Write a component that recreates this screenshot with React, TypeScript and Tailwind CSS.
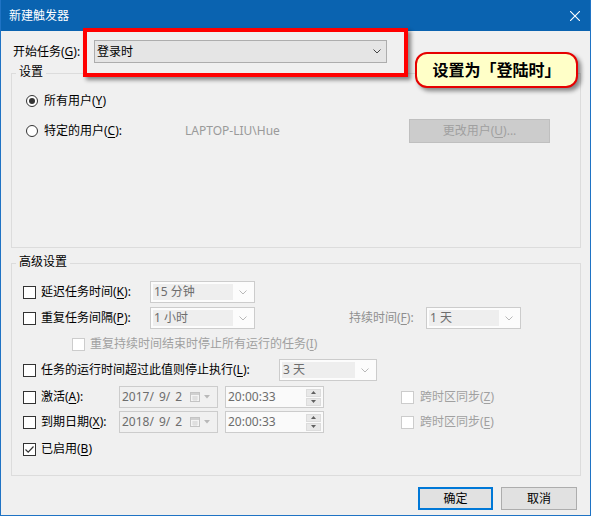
import type { ReactNode } from 'react';

// accelerator key, underlined like a Win32 label
const U = ({ children }: { children: ReactNode }) => (
  <span className="underline decoration-1 underline-offset-[2px]">{children}</span>
);

function CheckBox({ checked = false, disabled = false }: { checked?: boolean; disabled?: boolean }) {
  return (
    <span
      className={`flex h-[13px] w-[13px] shrink-0 items-center justify-center border bg-white ${
        disabled ? 'border-[#cccccc]' : 'border-[#333333]'
      }`}
    >
      {checked && (
        <svg width="11" height="11" viewBox="0 0 11 11">
          <path d="M1.5 5.5 L4.2 8.2 L9.5 2.5" fill="none" stroke="#333333" strokeWidth="1.2" />
        </svg>
      )}
    </span>
  );
}

function Radio({ checked = false }: { checked?: boolean }) {
  return (
    <span className="flex h-[12px] w-[12px] shrink-0 items-center justify-center rounded-full border border-[#333333] bg-white">
      {checked && <span className="h-[6px] w-[6px] rounded-full bg-[#333333]" />}
    </span>
  );
}

function Chevron({ color }: { color: string }) {
  return (
    <svg width="8" height="5" viewBox="0 0 8 5">
      <path d="M0.5 0.5 L4 4 L7.5 0.5" fill="none" stroke={color} strokeWidth="1" />
    </svg>
  );
}

function DisabledCombo({ value, className }: { value: string; className: string }) {
  return (
    <div className={`flex h-[22px] shrink-0 items-stretch border border-[#cccccc] bg-[#fcfcfc] p-[2px] ${className}`}>
      <div className="flex flex-1 items-center bg-[#eeeeee] pl-[1px] text-[#6d6d6d]">{value}</div>
      <div className="flex w-[19px] items-center justify-center">
        <Chevron color="#b8b8b8" />
      </div>
    </div>
  );
}

function DateBox({ y, m, d }: { y: string; m: string; d: string }) {
  return (
    <div className="flex h-[22px] w-[99px] shrink-0 items-center border border-[#cccccc] bg-[#f0f0f0] pl-[2px] text-[#6d6d6d]">
      <span>{y}/</span>
      <span className="ml-[5px]">{m}/</span>
      <span className="ml-[5px]">{d}</span>
      <span className="ml-auto mr-[7px] flex items-center gap-[4px]">
        <svg width="10" height="10" viewBox="0 0 10 10">
          <rect x="0.5" y="0.5" width="9" height="9" fill="#f4f4f4" stroke="#c4c4c4" />
          <rect x="1" y="1" width="8" height="2" fill="#d0d0d0" />
          <path d="M2 5h6M2 7h6M4 4v5M6 4v5" stroke="#d4d4d4" strokeWidth="0.8" />
        </svg>
        <svg width="6" height="4" viewBox="0 0 6 4">
          <path d="M0 0 L6 0 L3 3.5 Z" fill="#b8b8b8" />
        </svg>
      </span>
    </div>
  );
}

function TimeBox() {
  return (
    <div className="flex h-[22px] w-[99px] shrink-0 items-center border border-[#cccccc] bg-[#fafafa] pl-[2px] text-[#6d6d6d]">
      <span>20:00:33</span>
      <div className="ml-auto mr-[2px] flex h-[17px] w-[15px] flex-col gap-[1px]">
        <div className="flex flex-1 items-center justify-center border border-[#dcdcdc] bg-[#e8e8e8]">
          <svg width="5" height="3" viewBox="0 0 5 3">
            <path d="M0 3 L2.5 0 L5 3 Z" fill="#606060" />
          </svg>
        </div>
        <div className="flex flex-1 items-center justify-center border border-[#dcdcdc] bg-[#e8e8e8]">
          <svg width="5" height="3" viewBox="0 0 5 3">
            <path d="M0 0 L5 0 L2.5 3 Z" fill="#606060" />
          </svg>
        </div>
      </div>
    </div>
  );
}

export default function App() {
  return (
    <div className="relative flex h-[516px] w-[591px] flex-col border-x border-b border-[#1f73c4] bg-[#f0f0f0] font-['Noto_Sans','Noto_Sans_CJK_SC',sans-serif] text-[12px] leading-[16px] text-black">
      {/* Title bar */}
      <div className="flex h-[31px] shrink-0 items-center justify-between bg-[#0a63b0] pl-[8px] pr-[10px] text-white">
        <span>新建触发器</span>
        <svg width="10" height="10" viewBox="0 0 10 10">
          <path d="M0 0 L10 10 M10 0 L0 10" stroke="#ffffff" strokeWidth="1.1" />
        </svg>
      </div>

      <div className="flex flex-1 flex-col px-[10px]">
        {/* Begin the task */}
        <div className="mt-[9px] flex h-[23px] items-center">
          <span className="w-[83px] pl-[2px]">
            开始任务(<U>G</U>):
          </span>
          <div className="flex h-[23px] w-[293px] items-center justify-between border border-[#adadad] bg-[#e5e5e5] pl-[2px] pr-[5px]">
            <span>登录时</span>
            <Chevron color="#444444" />
          </div>
        </div>

        {/* Settings */}
        <fieldset className="mt-[1px] w-[570px] border border-[#dcdcdc]">
          <legend className="ml-[4px] px-[3px] pb-[3px] leading-[16px]">设置</legend>
          <div className="h-[164px] pt-[8px]">
            <div className="flex h-[20px] items-center pl-[14px]">
              <Radio checked />
              <span className="ml-[6px]">
                所有用户(<U>Y</U>)
              </span>
            </div>
            <div className="mt-[8px] flex h-[24px] items-center pl-[14px]">
              <Radio />
              <span className="ml-[6px] w-[141px]">
                特定的用户(<U>C</U>):
              </span>
              <span className="w-[224px] text-[#9a9a9a]">LAPTOP-LIU\Hue</span>
              <div className="flex h-[24px] w-[141px] items-center justify-center border border-[#bfbfbf] bg-[#cccccc] text-[#a0a0a0]">
                更改用户(<U>U</U>)...
              </div>
            </div>
          </div>
        </fieldset>

        {/* Advanced settings */}
        <fieldset className="mt-[6px] w-[570px] border border-[#dcdcdc]">
          <legend className="ml-[4px] px-[3px] pb-[3px] leading-[16px]">高级设置</legend>
          <div className="h-[194px]">
            <div className="mt-[8px] flex h-[22px] items-center pl-[11px]">
              <CheckBox />
              <span className="ml-[5px] w-[109px]">
                延迟任务时间(<U>K</U>):
              </span>
              <DisabledCombo value="15 分钟" className="w-[105px]" />
            </div>

            <div className="mt-[4px] flex h-[22px] items-center pl-[11px]">
              <CheckBox />
              <span className="ml-[5px] w-[109px]">
                重复任务间隔(<U>P</U>):
              </span>
              <DisabledCombo value="1 小时" className="w-[105px]" />
              <span className="ml-[94px] w-[77px] text-[#8f8f8f]">
                持续时间(<U>F</U>):
              </span>
              <DisabledCombo value="1 天" className="w-[95px]" />
            </div>

            <div className="mt-[4px] flex h-[22px] items-center pl-[60px]">
              <CheckBox disabled />
              <span className="ml-[5px] text-[#a0a0a0]">
                重复持续时间结束时停止所有运行的任务(<U>I</U>)
              </span>
            </div>

            <div className="mt-[4px] flex h-[22px] items-center pl-[11px]">
              <CheckBox />
              <span className="ml-[5px] w-[238px]">
                任务的运行时间超过此值则停止执行(<U>L</U>):
              </span>
              <DisabledCombo value="3 天" className="w-[98px]" />
            </div>

            <div className="mt-[5px] flex h-[22px] items-center pl-[11px]">
              <CheckBox />
              <span className="ml-[5px] w-[78px]">
                激活(<U>A</U>):
              </span>
              <DateBox y="2017" m="9" d="2" />
              <span className="ml-[7px]">
                <TimeBox />
              </span>
              <span className="ml-[77px]">
                <CheckBox disabled />
              </span>
              <span className="ml-[6px] text-[#a0a0a0]">
                跨时区同步(<U>Z</U>)
              </span>
            </div>

            <div className="mt-[3px] flex h-[22px] items-center pl-[11px]">
              <CheckBox />
              <span className="ml-[5px] w-[78px]">
                到期日期(<U>X</U>):
              </span>
              <DateBox y="2018" m="9" d="2" />
              <span className="ml-[7px]">
                <TimeBox />
              </span>
              <span className="ml-[77px]">
                <CheckBox disabled />
              </span>
              <span className="ml-[6px] text-[#a0a0a0]">
                跨时区同步(<U>E</U>)
              </span>
            </div>

            <div className="mt-[5px] flex h-[22px] items-center pl-[11px]">
              <CheckBox checked />
              <span className="ml-[5px]">
                已启用(<U>B</U>)
              </span>
            </div>
          </div>
        </fieldset>

        {/* OK / Cancel */}
        <div className="mt-[11px] flex justify-end gap-[8px] pr-[3px]">
          <button className="flex h-[23px] w-[75px] items-center justify-center border-2 border-[#0078d7] bg-[#e1e1e1]">
            确定
          </button>
          <button className="flex h-[23px] w-[76px] items-center justify-center border border-[#adadad] bg-[#e1e1e1]">
            取消
          </button>
        </div>
      </div>

      {/* Red highlight over the dropdown */}
      <div className="pointer-events-none absolute left-[82px] top-[28px] h-[49px] w-[325px] border-[4px] border-[#ff0000] shadow-[3px_3px_4px_rgba(0,0,0,0.45)]" />

      {/* Callout */}
      <div className="absolute left-[414px] top-[52px] flex h-[36px] w-[163px] items-center justify-center rounded-[12px] border-2 border-[#e60000] bg-[#ffffc8] text-[16px] font-bold shadow-[3px_3px_4px_rgba(0,0,0,0.45)]">
        设置为「登陆时」
      </div>
    </div>
  );
}
